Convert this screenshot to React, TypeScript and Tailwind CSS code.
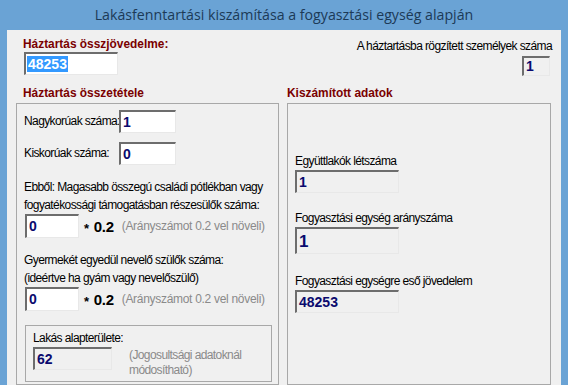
import React from "react";

const narrow = { fontFamily: '"Liberation Sans", Arial, sans-serif' };

const Field = ({ value, className = "", readOnly = false, big = false }: { value: string; className?: string; readOnly?: boolean; big?: boolean }) => (
  <div
    className={`shrink-0 flex items-center border-t-2 border-l-2 border-t-[#6d6d6d] border-l-[#6d6d6d] border-r border-b border-r-[#e8e8e8] border-b-[#e8e8e8] pl-[2px] font-bold tracking-normal text-[#0a0a6e] ${
      readOnly ? "bg-[#f0f0f0]" : "bg-white"
    } ${big ? "text-[17px]" : "text-[14px]"} ${className}`}
  >
    {value}
  </div>
);

const Heading = ({ children, className = "" }: { children: React.ReactNode; className?: string }) => (
  <div className={`text-[11.9px] leading-[14px] font-bold tracking-normal text-[#7a0000] ${className}`}>{children}</div>
);

// szorzó + szürke megjegyzés a számláló mező mellett
const Multiplier = () => (
  <>
    <span className="ml-[5px] font-bold text-[15px] tracking-[-0.3px] flex items-center">
      <span className="text-[13px] relative top-[2px] mr-[5px]">*</span>0.2
    </span>
    <span className="ml-[8px] text-[#8a8a8a] tracking-[-0.3px]">(Arányszámot 0.2 vel növeli)</span>
  </>
);

const App = () => {
  return (
    <div className="w-[568px] h-[385px] bg-[#6aa3d5] flex flex-col overflow-hidden">
      <div className="h-[31px] flex items-center justify-center text-[14.2px] text-[#1c3a57]" style={{ fontFamily: '"Open Sans", "Noto Sans", sans-serif' }}>
        Lakásfenntartási kiszámítása a fogyasztási egység alapján
      </div>
      <div className="flex-1 mx-[7px] bg-[#f0f0f0] flex flex-col text-[12px] leading-[15px] tracking-[-0.6px] text-black whitespace-nowrap" style={narrow}>
        <div className="flex justify-between pt-[7px] pl-[16px] pr-[9px]">
          <div className="flex flex-col">
            <Heading>Háztartás összjövedelme:</Heading>
            <div className="mt-[1px] ml-[1px] w-[94px] h-[23px] flex items-center border-t-2 border-l-2 border-t-[#6d6d6d] border-l-[#6d6d6d] border-r border-b border-r-[#e8e8e8] border-b-[#e8e8e8] bg-white pl-[1px]">
              <span className="bg-[#3399ff] text-white font-bold text-[14px] leading-[16px] px-[1px] tracking-normal">48253</span>
            </div>
          </div>
          <div className="flex flex-col items-end">
            <div className="pt-[2px]">A háztartásba rögzített személyek száma</div>
            <Field value="1" readOnly className="mt-[2px] mr-[2px] w-[28px] h-[20px]" />
          </div>
        </div>

        <div className="flex mt-[10px] pl-[9px]">
          <div className="w-[263px] flex flex-col">
            <Heading className="pl-[7px]">Háztartás összetétele</Heading>
            <div className="mt-[3px] h-[282px] border border-[#a8a8a8] flex flex-col pl-[7px]">
              <div className="flex items-center mt-[6px]">
                <div className="w-[95px]">Nagykorúak száma:</div>
                <Field value="1" className="w-[57px] h-[23px]" />
              </div>
              <div className="flex items-center mt-[9px]">
                <div className="w-[95px]">Kiskorúak száma:</div>
                <Field value="0" className="w-[57px] h-[23px]" />
              </div>
              <div className="mt-[13px] leading-[18px]">
                Ebből: Magasabb összegú családi pótlékban vagy
                <br />
                fogyatékossági támogatásban részesülők száma:
              </div>
              <div className="flex items-center">
                <Field value="0" className="ml-[1px] w-[54px] h-[24px]" />
                <Multiplier />
              </div>
              <div className="mt-[13px] leading-[18px]">
                Gyermekét egyedül nevelő szülők száma:
                <br />
                (ideértve ha gyám vagy nevelőszülő)
              </div>
              <div className="flex items-center">
                <Field value="0" className="ml-[1px] w-[54px] h-[24px]" />
                <Multiplier />
              </div>
              <div className="mt-[14px] ml-[1px] w-[247px] h-[57px] border border-[#a8a8a8] flex flex-col pl-[7px]">
                <div className="mt-[5px]">Lakás alapterülete:</div>
                <div className="flex items-start mt-[1px]">
                  <Field value="62" readOnly className="w-[79px] h-[23px]" />
                  <div className="ml-[17px] text-[#8a8a8a] leading-[15px] mt-[1px]">
                    (Jogosultsági adatoknál
                    <br />
                    módosítható)
                  </div>
                </div>
              </div>
            </div>
          </div>

          <div className="ml-[8px] w-[264px] flex flex-col">
            <Heading>Kiszámított adatok</Heading>
            <div className="mt-[3px] h-[282px] border border-[#a8a8a8] flex flex-col pl-[7px]">
              <div className="mt-[50px]">Együttlakók létszáma</div>
              <Field value="1" readOnly className="mt-[1px] w-[104px] h-[23px]" />
              <div className="mt-[18px]">Fogyasztási egység arányszáma</div>
              <Field value="1" readOnly big className="mt-[1px] w-[104px] h-[27px]" />
              <div className="mt-[20px]">Fogyasztási egységre eső jövedelem</div>
              <Field value="48253" readOnly className="mt-[1px] w-[104px] h-[23px]" />
            </div>
          </div>
        </div>
      </div>
    </div>
  );
};

export default App;
